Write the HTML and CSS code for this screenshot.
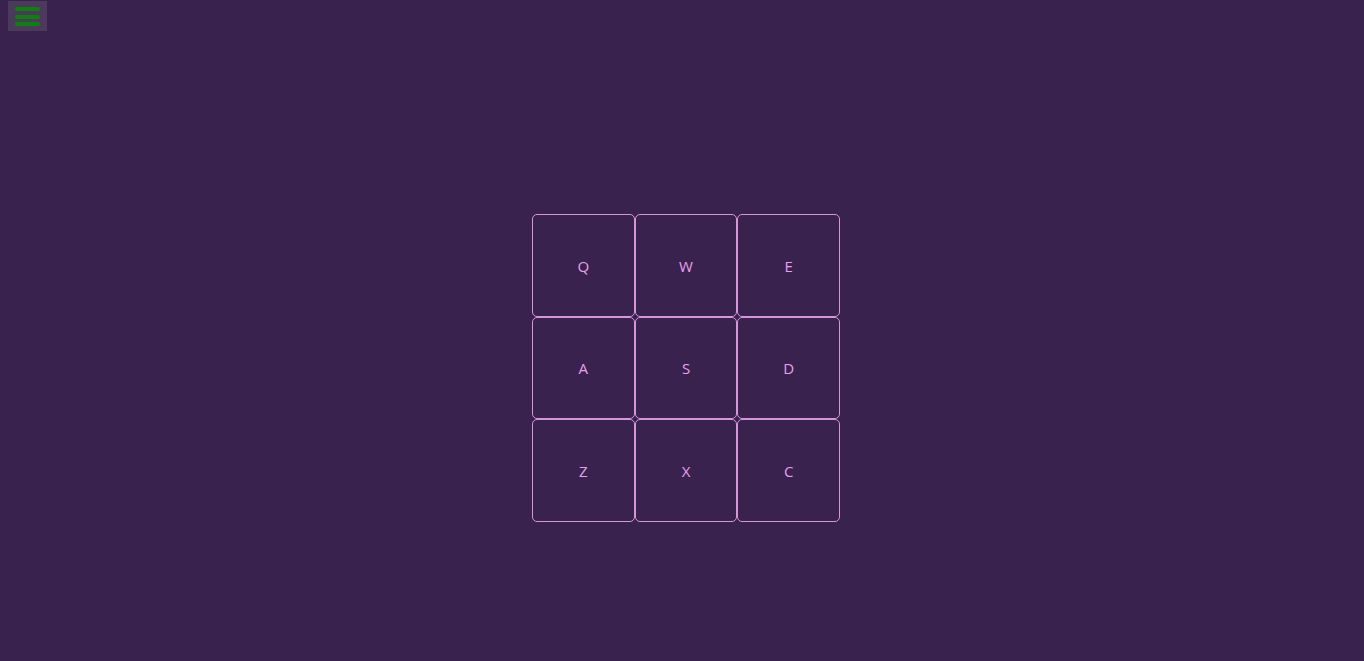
FILE: index.html
```html
<!DOCTYPE html>
<html>
<head>
<meta charset="utf-8">
<link rel="stylesheet" href="styles.css">
</head>
<body>
<header class="top">
  <button class="menu-btn" aria-label="menu">
    <span class="bar"></span><span class="bar"></span><span class="bar"></span>
  </button>
</header>
<main class="stage">
  <div class="pad">
    <div class="key">Q</div><div class="key">W</div><div class="key">E</div>
    <div class="key">A</div><div class="key">S</div><div class="key">D</div>
    <div class="key">Z</div><div class="key">X</div><div class="key">C</div>
  </div>
</main>
</body>
</html>
```
FILE: styles.css
```css
html, body {
  margin: 0;
  padding: 0;
  background: #3a224e;
  height: 100%;
  font-family: "Open Sans", "Noto Sans", sans-serif;
}
.top {
  padding: 1px 0 0 8px;
  height: 31px;
  box-sizing: border-box;
}
.menu-btn {
  width: 39px;
  height: 30px;
  margin: 0;
  padding: 6px 7px 5px;
  border: none;
  background: #4b3a5c;
  display: flex;
  flex-direction: column;
  justify-content: space-between;
  box-sizing: border-box;
}
.bar {
  display: block;
  height: 4px;
  width: 25px;
  background: #0b820b;
  border-radius: 2px;
}
.stage {
  display: flex;
  justify-content: center;
  padding: 183px 0 0 8px;
}
.pad {
  width: 308px;
  height: 308px;
  display: grid;
  grid-template-columns: repeat(3, 1fr);
  grid-template-rows: repeat(3, 1fr);
}
.key {
  border: 1px solid #d796dc;
  border-radius: 5px;
  display: flex;
  align-items: center;
  justify-content: center;
  padding-top: 1px;
  color: #e9a0ec;
  font-size: 15px;
}
```
